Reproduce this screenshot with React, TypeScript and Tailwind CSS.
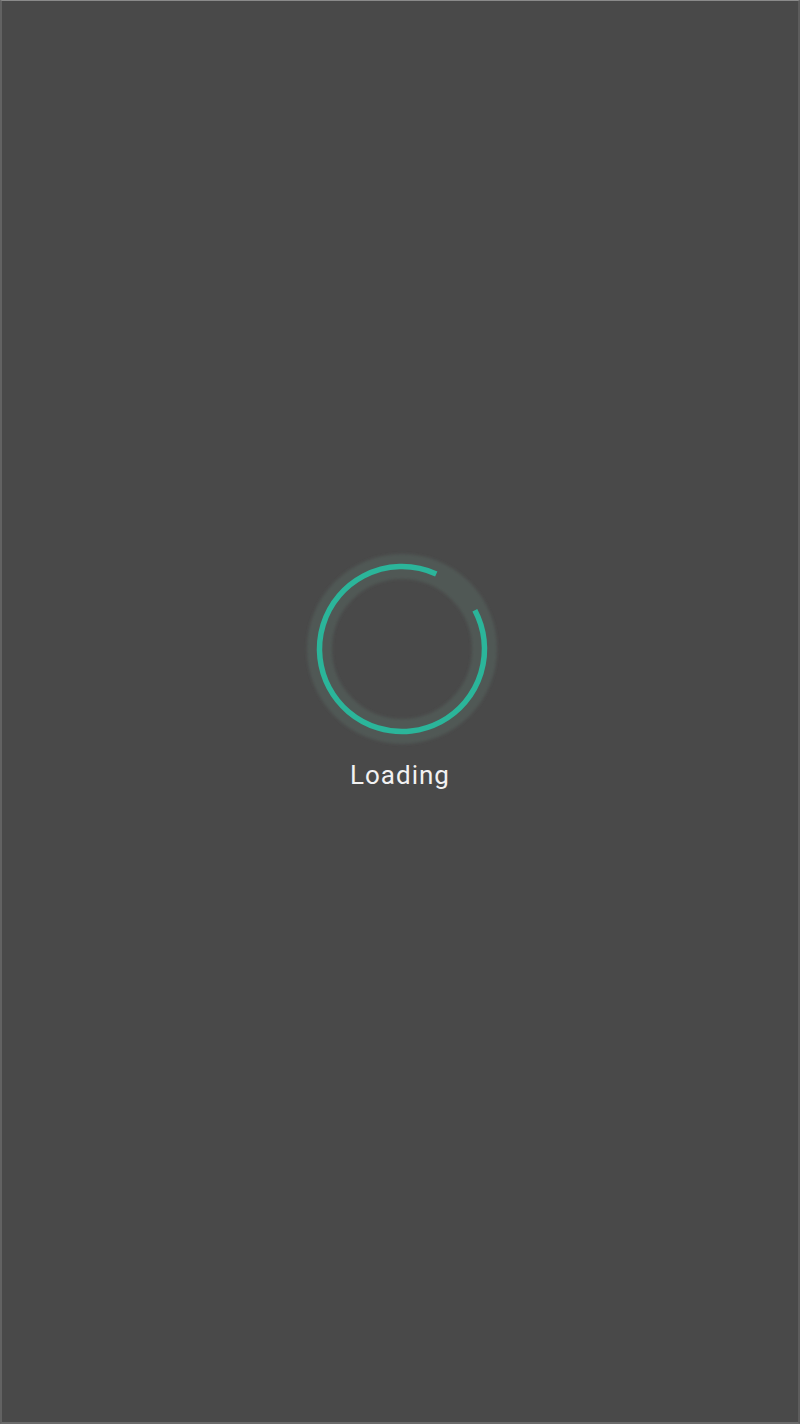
import React from "react";

const Spinner = () => {
  const r = 82.5;
  const c = 2 * Math.PI * r;
  // gap sits between ~28deg and ~66deg above the right side
  const arc = c * (322 / 360);
  return (
    <svg width="200" height="200" viewBox="0 0 200 200" className="block">
      <defs>
        <filter id="soft" x="-20%" y="-20%" width="140%" height="140%">
          <feGaussianBlur stdDeviation="1.5" />
        </filter>
      </defs>
      <circle cx="100" cy="100" r={r} fill="none" stroke="#55655e" strokeOpacity="0.55" strokeWidth="25" filter="url(#soft)" />
      <circle
        cx="100"
        cy="100"
        r={r}
        fill="none"
        stroke="#2bb59a"
        strokeWidth="5.5"
        strokeDasharray={`${arc} ${c}`}
        transform="rotate(-28 100 100)"
      />
    </svg>
  );
};

export default function App() {
  return (
    <div className="w-[800px] h-[1424px] bg-[#494949] border-t border-l-2 border-r-2 border-b-2 border-t-[#8a8a8a] border-l-[#626262] border-r-[#5c5c5c] border-b-[#6a6a6a] flex flex-col items-center" style={{ fontFamily: "Roboto, 'Noto Sans', sans-serif" }}>
      <div className="mt-[548px] ml-[4px]">
        <Spinner />
      </div>
      <div className="mt-[11px] text-[26px] leading-[30px] tracking-[1px] text-[#f2f2f2]" style={{ fontFamily: "Roboto, sans-serif" }}>
        Loading
      </div>
    </div>
  );
}
